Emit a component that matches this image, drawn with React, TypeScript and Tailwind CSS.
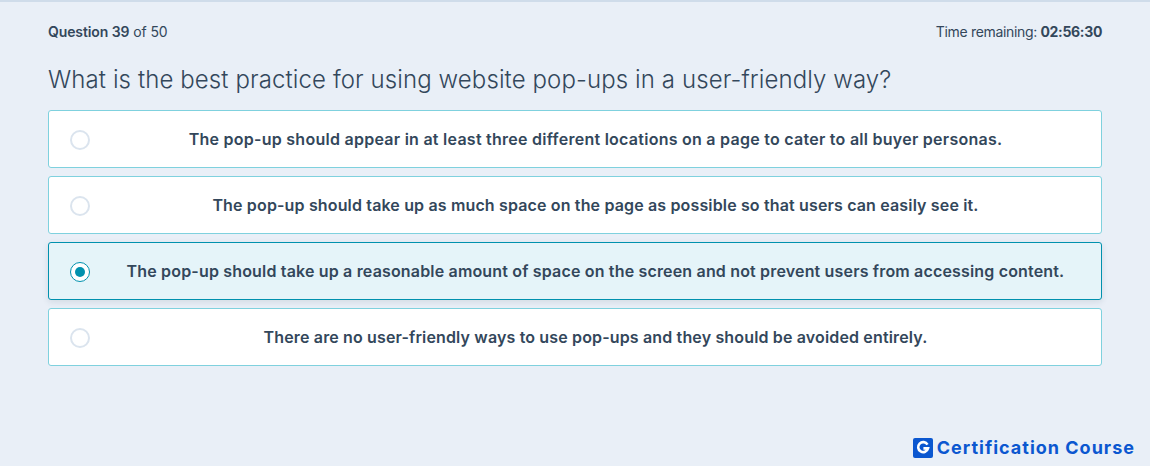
const options = [
  { text: "The pop-up should appear in at least three different locations on a page to cater to all buyer personas.", tracking: "tracking-[0.26px]" },
  { text: "The pop-up should take up as much space on the page as possible so that users can easily see it.", tracking: "tracking-[0.15px]" },
  { text: "The pop-up should take up a reasonable amount of space on the screen and not prevent users from accessing content.", tracking: "tracking-[0.17px]" },
  { text: "There are no user-friendly ways to use pop-ups and they should be avoided entirely.", tracking: "tracking-[0.15px]" },
];

const selected = 2;

function Option({ text, tracking, checked }: { text: string; tracking: string; checked: boolean }) {
  return (
    <div
      className={
        checked
          ? "flex h-[58px] items-center rounded-[3px] border border-[#0091ae] bg-[#e5f4f9] pl-[21px] shadow-[0_2px_6px_rgba(45,62,80,0.12)]"
          : "flex h-[58px] items-center rounded-[3px] border border-[#7fd1de] bg-white pl-[21px]"
      }
    >
      {checked ? (
        <span className="mt-[2px] flex h-[20px] w-[20px] shrink-0 items-center justify-center rounded-full border border-[#0091ae] bg-white">
          <span className="h-[10px] w-[10px] rounded-full bg-[#0091ae]" />
        </span>
      ) : (
        <span className="mt-[2px] h-[20px] w-[20px] shrink-0 rounded-full border-2 border-[#dbe4ee] bg-white" />
      )}
      <p className={`flex-1 text-center text-[16px] font-semibold leading-[24px] text-[#33475b] ${tracking}`}>
        {text}
      </p>
    </div>
  );
}

export default function App() {
  return (
    <div className="flex h-[466px] flex-col overflow-hidden border-t-2 border-[#cfdcea] bg-[#e9eff7] font-['Inter','Noto_Sans',sans-serif] text-[#33475b]">
      <div className="flex flex-col px-[48px] pt-[20px]">
        <div className="flex items-center justify-between text-[14px] leading-[20px]">
          <span className="tracking-[-0.1px]">
            <span className="font-semibold">Question 39</span> of 50
          </span>
          <span className="tracking-[-0.33px]">
            Time remaining: <span className="font-bold">02:56:30</span>
          </span>
        </div>
        <h1 className="mt-[20px] text-[24px] font-light leading-[36px] tracking-[0.1px]">
          What is the best practice for using website pop-ups in a user-friendly way?
        </h1>
        <div className="mt-[12px] flex flex-col gap-[8px]">
          {options.map((o, i) => (
            <Option key={o.text} text={o.text} tracking={o.tracking} checked={i === selected} />
          ))}
        </div>
      </div>
      <div className="mt-auto flex items-center justify-end gap-[4px] pb-[6px] pr-[15px]">
        <svg width="20" height="20" viewBox="0 0 20 20">
          <rect width="20" height="20" rx="2" fill="#0b57d0" />
          <path d="M14.5 6.6A5 5 0 1 0 15 10.4H10.4" fill="none" stroke="#fff" strokeWidth="2.6" />
        </svg>
        <span className="text-[18px] font-bold leading-[24px] tracking-[1px] text-[#0b57d0]">Certification Course</span>
      </div>
    </div>
  );
}
